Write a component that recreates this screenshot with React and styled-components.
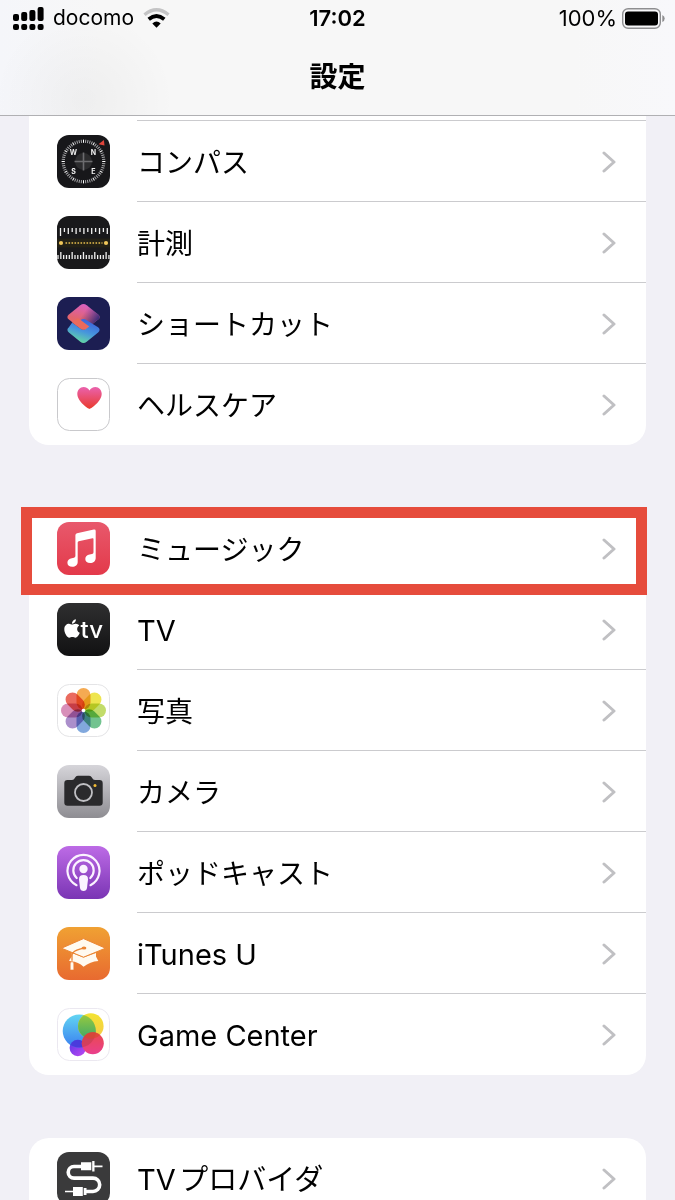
import styled, { createGlobalStyle } from "styled-components";
import { FaApple } from "react-icons/fa";

const colors = {
  page: "#f1f0f6",
  card: "#ffffff",
  bar: "#f7f7f7",
  line: "#cbcbce",
  barLine: "#b0b0b3",
  chevron: "#c0c0c3",
  mark: "#e64c3c",
  text: "#000000",
};

const GlobalStyle = createGlobalStyle`
  * {
    box-sizing: border-box;
  }
  body {
    margin: 0;
    background: ${colors.page};
    color: ${colors.text};
    font-family: Inter, "Noto Sans CJK JP", sans-serif;
  }
`;

/* ---------- app icons ---------- */

const compassTicks = Array.from({ length: 60 }, (_, i) => i * 6);

const CompassIcon = () => (
  <AppSvg viewBox="0 0 53 53" aria-hidden="true">
    <rect width="53" height="53" rx="12" fill="#17171a" />
    {compassTicks.map((deg) => (
      <path
        key={deg}
        d="M26.5 4.6v3.2"
        stroke={deg % 30 === 0 ? "#ffffff" : "#a9a9ac"}
        strokeWidth="1"
        transform={`rotate(${deg} 26.5 26.5)`}
      />
    ))}
    <circle cx="26.5" cy="26.5" r="8.5" fill="#2c2c2e" />
    <path d="M26.5 17.5v18M17.5 26.5h18" stroke="#6c6c6f" strokeWidth="1.6" />
    <path d="M41.5 9.3l5.4-4.3.6 5.6z" fill="#e0453c" />
    <CompassText x="16.5" y="19.5">W</CompassText>
    <CompassText x="36.5" y="19.5">N</CompassText>
    <CompassText x="16.5" y="38.8">S</CompassText>
    <CompassText x="36.5" y="38.8">E</CompassText>
  </AppSvg>
);

const MeasureIcon = () => (
  <AppSvg viewBox="0 0 53 53" aria-hidden="true">
    <rect width="53" height="53" rx="12" fill="#19191b" />
    <rect y="22.5" width="53" height="9" fill="#232116" />
    {Array.from({ length: 13 }, (_, i) => (
      <path
        key={i}
        d={`M${3.5 + i * 3.9} 12v${i === 0 ? 8 : i % 2 ? 4 : 6}`}
        stroke="#f1f1f1"
        strokeWidth="1.3"
      />
    ))}
    {Array.from({ length: 19 }, (_, i) => (
      <path
        key={i}
        d={`M${1 + i * 2.83} 43v${i % 4 === 1 ? -7 : -4}`}
        stroke="#f1f1f1"
        strokeWidth="1.3"
      />
    ))}
    <circle cx="4" cy="27" r="2.1" fill="#f0c75a" />
    <circle cx="49" cy="27" r="2.1" fill="#f0c75a" />
    <path d="M8.5 27h37" stroke="#e8be4e" strokeWidth="1.6" strokeDasharray="1.6 1.4" />
  </AppSvg>
);

const ShortcutsIcon = () => (
  <AppSvg viewBox="0 0 53 53" aria-hidden="true">
    <defs>
      <linearGradient id="scTop" x1="0.6" y1="0" x2="0.3" y2="1">
        <stop offset="0" stopColor="#d860c4" />
        <stop offset="0.6" stopColor="#e3646f" />
        <stop offset="1" stopColor="#ee6a55" />
      </linearGradient>
      <linearGradient id="scShade" x1="0.5" y1="0.35" x2="0.95" y2="0.6">
        <stop offset="0" stopColor="#4a3488" stopOpacity="0" />
        <stop offset="1" stopColor="#33297a" stopOpacity="0.95" />
      </linearGradient>
      <linearGradient id="scBottom" x1="0.75" y1="0.1" x2="0.35" y2="1">
        <stop offset="0" stopColor="#3c63dd" />
        <stop offset="0.5" stopColor="#4796dc" />
        <stop offset="1" stopColor="#66dca0" />
      </linearGradient>
    </defs>
    <rect width="53" height="53" rx="12" fill="#1c1e52" />
    <path
      d="M23.3 8.200q3.200-2.400 6.400 0l11.400 9.200q3 2.600 0 5.200l-11.400 8.900q-3.200 2.400-6.400 0l-11.400-8.900q-3-2.600 0-5.200z"
      fill="url(#scTop)"
    />
    <path
      d="M23.3 8.200q3.200-2.400 6.400 0l11.400 9.200q3 2.600 0 5.200l-11.400 8.900q-3.200 2.400-6.400 0l-11.400-8.900q-3-2.600 0-5.200z"
      fill="url(#scShade)"
    />
    <path
      d="M15.200 25.600l8.100 5.900q3.200 2.400 5 .6 2.400-2.200-.2-5.200l-4.600-4q3.500-2 6.200.3l11.400 7q3 2.600 0 5.200l-11.400 9.400q-3.200 2.400-6.400 0l-11.400-9.400q-3-2.600 0-5.200z"
      fill="url(#scBottom)"
    />
    <path
      d="M15.200 25.600l8.100 5.900q3.200 2.400 6.400 0l2.600-2-8.800-6.600-3-2z"
      fill="#ea6a5c"
    />
  </AppSvg>
);

const HealthIcon = () => (
  <AppSvg viewBox="0 0 53 53" aria-hidden="true">
    <defs>
      <linearGradient id="health" x1="0" y1="0" x2="0" y2="1">
        <stop offset="0" stopColor="#ea62ae" />
        <stop offset="1" stopColor="#e93a2c" />
      </linearGradient>
    </defs>
    <rect x="0.5" y="0.5" width="52" height="52" rx="12" fill="#fff" stroke="#c9c9cc" />
    <path
      d="M32.5 31c-1 0-12.2-7.4-12.2-15.2 0-4 2.8-6.9 6.2-6.9 2.7 0 4.8 1.3 6 3.5 1.2-2.2 3.3-3.5 6-3.5 3.400 0 6.200 2.900 6.200 6.900C44.700 23.600 33.500 31 32.500 31z"
      fill="url(#health)"
    />
  </AppSvg>
);

const MusicIcon = () => (
  <AppSvg viewBox="0 0 53 53" aria-hidden="true">
    <defs>
      <linearGradient id="music" x1="0" y1="0" x2="0" y2="1">
        <stop offset="0" stopColor="#e8596c" />
        <stop offset="1" stopColor="#e3394a" />
      </linearGradient>
    </defs>
    <rect width="53" height="53" rx="12" fill="url(#music)" />
    <path
      d="M18.4 13.2q0-1.600 1.600-2l16.800-3.600q1.900-.4 1.900 1.400v27c0 3.100-2.400 5-5.500 5-2.900 0-4.900-1.700-4.900-4.100 0-2.300 1.700-3.900 4.300-4.400l2.400-.5q1.500-.3 1.500-1.700V17.100q0-1-1-.8l-13.800 2.900q-1 .2-1 1.200v19.300c0 3.200-2.300 5.100-5.400 5.100-2.900 0-4.900-1.700-4.900-4.100 0-2.400 1.800-4 4.400-4.500l2.200-.5q1.400-.3 1.400-1.700z"
      fill="#fff"
    />
  </AppSvg>
);

const AppleTvIcon = () => (
  <AppSvg viewBox="0 0 53 53" aria-hidden="true">
    <defs>
      <linearGradient id="appletv" x1="0" y1="0" x2="0" y2="1">
        <stop offset="0" stopColor="#2f2f30" />
        <stop offset="1" stopColor="#111112" />
      </linearGradient>
    </defs>
    <rect width="53" height="53" rx="12" fill="url(#appletv)" />
    <FaApple x="4.500" y="15" size="21" color="#fff" />
    <TvText x="23.500" y="35">tv</TvText>
  </AppSvg>
);

const petals = ["#f4a13f", "#ece23c", "#bcd95a", "#62bd83", "#739fda", "#a283c6", "#d483b2", "#e85b4d"];

const PhotosIcon = () => (
  <AppSvg viewBox="0 0 53 53" aria-hidden="true">
    <rect x="0.5" y="0.5" width="52" height="52" rx="12" fill="#fff" stroke="#e4e4e6" />
    <PetalGroup>
      {petals.map((color, idx) => (
        <rect
          key={color}
          x="19.5"
          y="4"
          width="14"
          height="21.5"
          rx="7"
          fill={color}
          transform={`rotate(${idx * 45} 26.5 26.5)`}
        />
      ))}
    </PetalGroup>
    <circle cx="26.5" cy="26.5" r="1.8" fill="#fff" />
  </AppSvg>
);

const CameraIcon = () => (
  <AppSvg viewBox="0 0 53 53" aria-hidden="true">
    <defs>
      <linearGradient id="camera" x1="0" y1="0" x2="0" y2="1">
        <stop offset="0" stopColor="#d6d5da" />
        <stop offset="1" stopColor="#8e8d92" />
      </linearGradient>
    </defs>
    <rect width="53" height="53" rx="12" fill="url(#camera)" />
    <path
      d="M10.5 15h4.200q1.800 0 2.800-1.500l1-1.500q1-1.300 2.600-1.300h10.800q1.600 0 2.600 1.300l1 1.500q1 1.500 2.800 1.500h4.200q3.200 0 3.200 3.200v19.300q0 3.200-3.200 3.200h-32q-3.200 0-3.200-3.200V18.200q0-3.200 3.200-3.200z"
      fill="#2a2a2c"
    />
    <circle cx="26.5" cy="27.5" r="8.5" fill="none" stroke="#c0c0c4" strokeWidth="1.8" />
    <circle cx="38" cy="20.5" r="1.5" fill="#f2bb34" />
  </AppSvg>
);

const PodcastIcon = () => (
  <AppSvg viewBox="0 0 53 53" aria-hidden="true">
    <defs>
      <linearGradient id="podcast" x1="0" y1="0" x2="0" y2="1">
        <stop offset="0" stopColor="#bd6be6" />
        <stop offset="1" stopColor="#7a35b4" />
      </linearGradient>
    </defs>
    <rect width="53" height="53" rx="12" fill="url(#podcast)" />
    <g fill="none" stroke="#fbf3ff" strokeWidth="2.2" strokeLinecap="round">
      <path d="M19.5 39.2a16 16 0 1 1 14 0" />
      <path d="M19.7 32a10.200 10.200 0 1 1 13.600 0" />
    </g>
    <circle cx="26.5" cy="23" r="4.2" fill="#fbf3ff" />
    <path
      d="M22 33.200q0-4.200 4.500-4.200t4.500 4.200l-1 8.800q-.5 3-3.500 3t-3.500-3z"
      fill="#fbf3ff"
    />
  </AppSvg>
);

const ItunesUIcon = () => (
  <AppSvg viewBox="0 0 53 53" aria-hidden="true">
    <defs>
      <linearGradient id="itunesu" x1="0" y1="0" x2="0" y2="1">
        <stop offset="0" stopColor="#f0a133" />
        <stop offset="1" stopColor="#e86a30" />
      </linearGradient>
    </defs>
    <rect width="53" height="53" rx="12" fill="url(#itunesu)" />
    <path d="M14.8 26l11.7 4.500L39 26v3.500l2.300 4.500q-8 .4-14.800 5.800-5-5-12.500-5.500l-2-.5 2.800-4.500z" fill="#fffaf0" />
    <path d="M4.500 21.200l22-9.600 22 9.600-22 9z" fill="#fffaf0" stroke="#eb8632" strokeWidth="1" />
    <path d="M26.500 21.200q-8 1.800-10.500 4.500-1 1.500-1 3v5" fill="none" stroke="#ea8433" strokeWidth="1.3" />
    <ellipse cx="27" cy="21" rx="2.400" ry="1.500" fill="#ea8433" />
    <path d="M13.200 36q1.800-3 3.600 0v7h-3.600z" fill="#fffaf0" stroke="#e97830" strokeWidth="0.600" />
  </AppSvg>
);

const GameCenterIcon = () => (
  <AppSvg viewBox="0 0 53 53" aria-hidden="true">
    <defs>
      <linearGradient id="gcBlue" x1="0" y1="0" x2="0" y2="1">
        <stop offset="0" stopColor="#62d5f2" />
        <stop offset="1" stopColor="#3a7ff0" />
      </linearGradient>
      <linearGradient id="gcYellow" x1="0" y1="0" x2="0" y2="1">
        <stop offset="0" stopColor="#f3e332" />
        <stop offset="1" stopColor="#f6c94a" />
      </linearGradient>
      <linearGradient id="gcGreen" x1="0" y1="0" x2="0" y2="1">
        <stop offset="0" stopColor="#9ccb3c" />
        <stop offset="1" stopColor="#3fa968" />
      </linearGradient>
      <linearGradient id="gcRed" x1="0" y1="0" x2="0" y2="1">
        <stop offset="0" stopColor="#ea4a4c" />
        <stop offset="1" stopColor="#ea3f8d" />
      </linearGradient>
      <linearGradient id="gcPurple" x1="0" y1="0" x2="1" y2="1">
        <stop offset="0" stopColor="#5a35e8" />
        <stop offset="1" stopColor="#c04af0" />
      </linearGradient>
      <clipPath id="gcBlueClip">
        <circle cx="22.300" cy="23" r="16.600" />
      </clipPath>
      <clipPath id="gcRedClip">
        <circle cx="35.800" cy="35.300" r="11" />
      </clipPath>
    </defs>
    <rect x="0.5" y="0.5" width="52" height="52" rx="12" fill="#fff" stroke="#ebe8f0" />
    <circle cx="20.800" cy="40" r="8.200" fill="url(#gcPurple)" />
    <circle cx="22.300" cy="23" r="16.600" fill="url(#gcBlue)" />
    <circle cx="20.800" cy="40" r="8.200" fill="#4a3bdc" clipPath="url(#gcBlueClip)" />
    <circle cx="33.800" cy="18" r="12.800" fill="url(#gcYellow)" />
    <circle cx="33.800" cy="18" r="12.800" fill="url(#gcGreen)" clipPath="url(#gcBlueClip)" />
    <circle cx="35.800" cy="35.300" r="11" fill="url(#gcRed)" />
    <circle cx="22.300" cy="23" r="16.600" fill="#c33c50" opacity="0.600" clipPath="url(#gcRedClip)" />
    <circle cx="33.800" cy="18" r="12.800" fill="#d8492c" opacity="0.600" clipPath="url(#gcRedClip)" />
  </AppSvg>
);

const TvProviderIcon = () => (
  <AppSvg viewBox="0 0 53 53" aria-hidden="true">
    <rect width="53" height="53" rx="12" fill="#3a3a3b" />
    <path
      d="M24 14.500h-7a5.800 5.800 0 0 0 0 11.600h19a6.700 6.700 0 0 1 0 13.400h-8"
      fill="none"
      stroke="#fff"
      strokeWidth="3.600"
    />
    <path d="M24 10.300h10.300v8H24zM35.200 9h2.300v10.500h-2.300zM37.500 13.600h8v1.600h-8z" fill="#fff" />
    <path d="M16 35h9.800v9H16zM26.700 36h2.800v7h-2.800zM8 38.700h8v1.600H8z" fill="#fff" />
  </AppSvg>
);

/* ---------- status bar icons ---------- */

const SignalIcon = () => (
  <svg width="31" height="23" viewBox="0 0 31 23" aria-hidden="true">
    <rect x="0" y="7" width="6" height="7" rx="2" />
    <rect x="8.2" y="5" width="6" height="9" rx="2" />
    <rect x="16.4" y="3" width="6" height="11" rx="2" />
    <rect x="24.6" y="0" width="6" height="14" rx="2" />
    <rect x="0" y="17" width="6" height="6" rx="2" />
    <rect x="8.2" y="17" width="6" height="6" rx="2" />
    <rect x="16.4" y="17" width="6" height="6" rx="2" />
    <rect x="24.6" y="17" width="6" height="6" rx="2" />
  </svg>
);

const WifiIcon = () => (
  <svg width="27" height="20" viewBox="0 0 27 20" aria-hidden="true">
    <path d="M1.500 6.800q12-10 24 0" fill="none" stroke="#c4c4c5" strokeWidth="3.400" />
    <path d="M5.700 11.200q7.800-6.400 15.600 0" fill="none" stroke="#000" strokeWidth="3.800" />
    <path d="M9.300 15.500q4.200-3.800 8.400 0l-4.200 4.200z" fill="#000" />
  </svg>
);

const BatteryIcon = () => (
  <svg width="43" height="21" viewBox="0 0 43 21" aria-hidden="true">
    <rect x="0.700" y="0.700" width="37.600" height="19.600" rx="5.500" fill="none" stroke="#8e8e90" strokeWidth="1.400" />
    <rect x="3" y="3.500" width="33" height="14" rx="3" fill="#000" />
    <path d="M40.300 7q2.400 1 2.400 3.500t-2.400 3.500z" fill="#8e8e90" />
  </svg>
);

const ChevronIcon = () => (
  <Chevron viewBox="0 0 14 22" aria-hidden="true">
    <path d="M2 2l10 9-10 9" />
  </Chevron>
);

/* ---------- data ---------- */

const basicApps = [
  { name: "コンパス", Icon: CompassIcon },
  { name: "計測", Icon: MeasureIcon },
  { name: "ショートカット", Icon: ShortcutsIcon },
  { name: "ヘルスケア", Icon: HealthIcon },
];

const mediaApps = [
  { name: "ミュージック", Icon: MusicIcon, marked: true },
  { name: "TV", Icon: AppleTvIcon, latin: true },
  { name: "写真", Icon: PhotosIcon },
  { name: "カメラ", Icon: CameraIcon },
  { name: "ポッドキャスト", Icon: PodcastIcon },
  { name: "iTunes U", Icon: ItunesUIcon, latin: true },
  { name: "Game Center", Icon: GameCenterIcon, latin: true },
];

const providerApps = [{ name: "TVプロバイダ", Icon: TvProviderIcon, latin: true }];

function AppList({ items, continued }) {
  return (
    <Card $continued={continued}>
      {continued && <RowRest aria-hidden="true" />}
      {items.map(({ name, Icon, marked, latin }) => (
        <Row key={name}>
          <RowLink href="#">
            <Icon />
            <RowBody>
              <RowName $latin={latin}>{name}</RowName>
              <ChevronIcon />
            </RowBody>
          </RowLink>
          {marked && <Marker />}
        </Row>
      ))}
    </Card>
  );
}

function App() {
  return (
    <Screen>
      <GlobalStyle />
      <Header>
        <StatusBar>
          <Carrier>
            <SignalIcon />
            <span>docomo</span>
            <WifiIcon />
          </Carrier>
          <Clock>17:02</Clock>
          <Power>
            <span>100%</span>
            <BatteryIcon />
          </Power>
        </StatusBar>
        <Title>設定</Title>
      </Header>
      <Content>
        <AppList items={basicApps} continued />
        <AppList items={mediaApps} />
        <AppList items={providerApps} />
      </Content>
    </Screen>
  );
}

export default App;

const Screen = styled.div`
  display: flex;
  flex-direction: column;
  height: 100vh;
  overflow: hidden;
  background: ${colors.page};
`;

const Header = styled.header`
  flex: none;
  border-bottom: 1px solid ${colors.barLine};
  background:
    radial-gradient(ellipse 90px 90px at 84px 100px, rgba(0, 0, 0, 0.035), transparent),
    linear-gradient(to right, #f5f6fa, ${colors.bar} 15%, ${colors.bar} 85%, #f8f8fb);
`;

const StatusBar = styled.div`
  display: grid;
  grid-template-columns: 1fr auto 1fr;
  align-items: center;
  padding: 0 10px;
  font-size: 22px;
  line-height: 36px;
`;

const Carrier = styled.div`
  display: flex;
  align-items: center;
  gap: 9px;
  padding-left: 3px;
  font-size: 21px;
`;

const Power = styled.div`
  display: flex;
  align-items: center;
  justify-content: flex-end;
  gap: 5px;
`;

const Clock = styled.time`
  font-weight: 600;
`;

const Title = styled.h1`
  margin: 0;
  padding-top: 4px;
  font-size: 28px;
  font-weight: 700;
  line-height: 75px;
  text-align: center;
`;

const Content = styled.main`
  display: flex;
  flex: 1;
  flex-direction: column;
  gap: 63px;
  min-height: 0;
  padding: 0 29px;
  overflow-y: auto;
  scrollbar-width: none;
`;

const Card = styled.ul`
  flex: none;
  margin: 0;
  padding: 0;
  border-radius: ${({ $continued }) => ($continued ? "0 0 20px 20px" : "20px")};
  background: ${colors.card};
  list-style: none;
`;

/* lower edge of the row that is scrolled under the header */
const RowRest = styled.li`
  height: 5px;
  margin-left: 108px;
  border-bottom: 1px solid ${colors.line};
`;

const RowLink = styled.a`
  display: flex;
  align-items: center;
  gap: 27px;
  padding-left: 28px;
  color: inherit;
  text-decoration: none;
`;

const RowBody = styled.div`
  display: flex;
  flex: 1;
  align-items: center;
  justify-content: space-between;
  height: 81px;
  padding: 2px 30px 0 0;
  border-bottom: 1px solid ${colors.line};
`;

const Row = styled.li`
  position: relative;
  &:last-child ${RowBody} {
    border-bottom-color: transparent;
  }
`;

const RowName = styled.span`
  padding-top: 2px;
  font-size: ${({ $latin }) => ($latin ? "29px" : "28px")};
  line-height: 40px;
  text-autospace: normal;
`;

const Marker = styled.div`
  position: absolute;
  z-index: 1;
  inset: -1px -1px -6px -8px;
  border: 11px solid ${colors.mark};
  pointer-events: none;
`;

const AppSvg = styled.svg`
  flex: none;
  width: 53px;
  height: 53px;
`;

const CompassText = styled.text`
  fill: #f2f2f2;
  font-size: 7px;
  font-weight: 700;
  text-anchor: middle;
`;

const TvText = styled.text`
  fill: #ffffff;
  font-size: 24px;
  font-weight: 500;
`;

const PetalGroup = styled.g`
  isolation: isolate;
  rect {
    mix-blend-mode: multiply;
    opacity: 0.9;
  }
`;

const Chevron = styled.svg`
  flex: none;
  width: 14px;
  height: 22px;
  fill: none;
  stroke: ${colors.chevron};
  stroke-width: 3px;
  stroke-linecap: round;
  stroke-linejoin: round;
`;
